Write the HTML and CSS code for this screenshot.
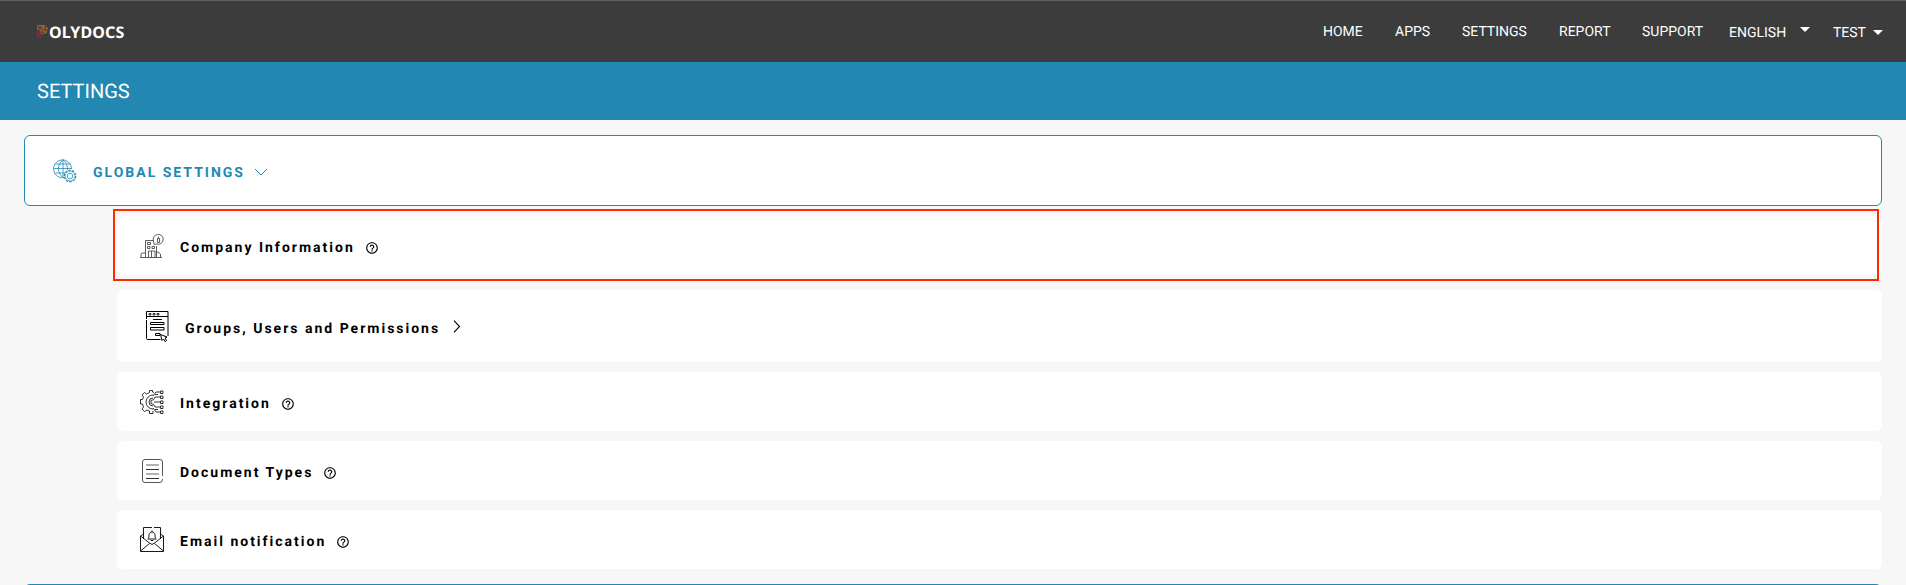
FILE: index.html
```html
<!DOCTYPE html>
<html lang="en">
<head>
<meta charset="utf-8">
<title>Settings</title>
<link rel="stylesheet" href="styles.css">
</head>
<body>
<svg width="0" height="0" class="defs">
  <symbol id="help" viewBox="0 0 24 24"><path fill="currentColor" d="M11 18h2v-2h-2v2zm1-16C6.48 2 2 6.48 2 12s4.480 10 10 10 10-4.480 10-10S17.520 2 12 2zm0 18c-4.410 0-8-3.590-8-8s3.590-8 8-8 8 3.590 8 8-3.590 8-8 8zm0-14c-2.210 0-4 1.790-4 4h2c0-1.100.9-2 2-2s2 .9 2 2c0 2-3 1.750-3 5h2c0-2.250 3-2.500 3-5 0-2.210-1.790-4-4-4z"/></symbol>
</svg>
<header class="topbar">
  <a class="logo">
    <svg class="logo-mark" width="11" height="13" viewBox="0 0 11 13" fill="none" stroke-width=".7">
      <path stroke="#c07a28" d="M.5 4V.5H7L10.500 3 9 7.500 5 9 3.500 5 .5 4 4 .5 6 4 10.500 3M7 .5 6 4 9 7.500 3.500 5 7 .5"/>
      <path stroke="#a8222a" d="M.5 4V12.500H4V8.500L.5 4M.5 8 4 8.500.5 12.500M3.500 5 .5 8 4 12.500M4 8.500 5 9"/>
    </svg>
    <span class="logo-text">OLYDOCS</span>
  </a>
  <nav class="nav">
    <a class="home">HOME</a><a class="apps">APPS</a><a class="set">SETTINGS</a><a class="report">REPORT</a><a class="support">SUPPORT</a>
    <a class="lang">ENGLISH<i class="caret"></i></a><a class="user">TEST<i class="caret"></i></a>
  </nav>
</header>
<div class="banner">SETTINGS</div>
<main class="content">
  <section class="group">
    <svg class="globe" width="24" height="24" viewBox="0 0 24 24" fill="none" stroke="currentColor" stroke-width=".8">
      <path d="M12 18.500A9 9 0 1 1 18.500 10M1 9.500H19M2.500 5H17.500M2.500 14H12M10 .7V18.500M10 .7C4 5 4 14 10 18.500M10 .7C14 4 14.500 7 14.500 11"/>
      <circle cx="17" cy="17" r="5.700" stroke-width="1.200" stroke-dasharray="2.500 1"/><circle cx="17" cy="17" r="4.700" stroke-width=".5"/><circle cx="17" cy="17" r="2.800"/>
    </svg>
    <span class="group-title">GLOBAL SETTINGS</span>
    <svg class="down" width="14" height="8" viewBox="0 0 14 8" fill="none" stroke="currentColor"><path d="M1 1 7 7 13 1"/></svg>
  </section>
  <div class="rows">
    <div class="row">
      <svg class="icon" width="24" height="24" viewBox="0 0 24 24" fill="none" stroke="#333" stroke-width=".8">
        <path d="M0 23.500H22M1 23V20.500Q1 19 3 19H5M5.500 23V6.500H13M16.500 12V23M20.500 23V20Q19 18 16.500 18M8.500 23V17H15V23M11.500 17V23M7.500 8.500H10.500V10.500H7.500ZM7.500 12.500H10V14.500H7.500ZM12 12.500H14.500V14.500H12Z"/>
        <path d="M14 10.500 13.500 7A5 5 0 1 1 16.500 10Z"/><path d="M18.500 2.500V4M17.500 4.500H19.500V8.500H17.500Z"/>
      </svg>
      <span>Company Information</span><svg class="help"><use href="#help"/></svg>
    </div>
    <div class="row tall">
      <svg class="icon" width="24" height="32" viewBox="0 0 24 32" fill="none" stroke="currentColor">
        <path d="M1.500 8V.5H23V25M1.500 9V27.500Q1.500 28.500 3 28.500H15.500M1.500 5.500H23M8 8.500H17"/>
        <path stroke-width=".8" d="M4 2.500H6V4H4ZM8 2.500H10V4H8ZM12 2.500H14V4H12Z"/><path d="M5.500 11.500H19V13.500H5.500ZM5.500 16.500H19V19H5.500ZM15 24.500H10.500V22.500H15V24"/>
        <path fill="#fff" d="M15.500 23.500 22 26 20 27 21.500 29.500 20 30.500 18.500 28 17 29.500Z"/>
      </svg>
      <span>Groups, Users and Permissions</span>
      <svg class="right" width="8" height="13" viewBox="0 0 8 13" fill="none" stroke="currentColor" stroke-width="1.100"><path d="M1 .7 6.500 6.500 1 12.300"/></svg>
    </div>
    <div class="row">
      <svg class="icon" width="24" height="24" viewBox="0 0 24 24" fill="none" stroke="currentColor" stroke-width=".8">
        <path d="M14 2.500 12.500 2V.5H9.500V2.500L6.500 4 4.500 2.500 2 5 3.500 7 2.500 9.500H.5V14H2.500L3.500 17 2 19 4.500 21.500 7 20 9.500 21V23.500H13V21"/>
        <path d="M13 5A7 7 0 0 0 13 19M13 8A4 4 0 0 0 13 16M14 9.500 11 10.500V13.500L14 14.500"/>
        <path d="M14 12H20M14 9 15 7H20M14 15 15 17H20M13 6 16 2H20M13 18 16 22H20M18 4.500H15M18 19.500H15"/>
        <path d="M20.500 1H23V3.500H20.500ZM20.500 6H23V8.500H20.500ZM20.500 11H23V13.500H20.500ZM20.500 16H23V18.500H20.500ZM20.500 21H23V23.500H20.500Z"/>
      </svg>
      <span>Integration</span><svg class="help"><use href="#help"/></svg>
    </div>
    <div class="row">
      <svg class="icon" width="24" height="24" viewBox="0 0 24 24" fill="none" stroke="#555">
        <path d="M22.500 17V3Q22.500.5 20 .5H5Q2.500.5 2.500 3V21Q2.500 23.500 5 23.500H20Q22.500 23.500 22.500 20"/>
        <path stroke="#999" stroke-width="1.500" d="M6 6H19M6 15H19"/><path stroke="#333" d="M6 10.500H19M6 19.500H19"/>
      </svg>
      <span>Document Types</span><svg class="help"><use href="#help"/></svg>
    </div>
    <div class="row">
      <svg class="icon" width="24" height="26" viewBox="0 0 24 26" fill="none" stroke="currentColor" stroke-width=".9">
        <path d="M.5 9V24.500H23.500V9L20.500 7M3.500 7 .5 9 9.500 16 12 17.500 14.500 16 23.500 9M3.500 12V.5H12M14 .5H20.500V12M.5 24 9.500 16.500M23.500 24 14.500 16.500"/>
        <path d="M7.500 12H16.500M8.500 11.500Q9 10.500 9 8C9 4 15 4 15 8Q15 10.500 15.500 11.500M12 3.500V5M10.500 13Q12 14.500 13.500 13"/>
      </svg>
      <span>Email notification</span><svg class="help"><use href="#help"/></svg>
    </div>
    <div class="highlight"></div>
  </div>
  <section class="group"></section>
</main>
</body>
</html>
```
FILE: styles.css
```css
* { box-sizing: border-box; }
body { margin: 0; background: #f7f7f7; font-family: Roboto, sans-serif; color: #000; text-rendering: geometricPrecision; }
.defs { position: absolute; }
svg { flex: none; display: block; }
.topbar { height: 62px; background: #3c3c3c; border-top: 1px solid #5f6063; display: flex; justify-content: space-between; padding: 0 23px 0 37px; color: #fff; }
.logo { display: flex; align-items: flex-start; padding-top: 24px; }
.logo-text { font: 700 16px/22px "Noto Sans", sans-serif; letter-spacing: .1px; margin: -4px 0 0 1px; }
.nav { display: flex; padding-top: 23px; font-size: 14px; line-height: 16px; white-space: nowrap; }
.home { width: 72px; }
.apps { width: 67px; }
.set { width: 97px; }
.report { width: 83px; }
.support { width: 87px; }
.lang, .user { display: flex; padding-top: 1px; }
.lang { width: 104px; }
.user { width: 50px; }
.caret { margin-left: auto; border: 5px solid transparent; border-top-color: #fff; border-bottom: 0; height: 5px; margin-top: 5px; }
.lang .caret { margin: 2px 23px 0 auto; }
.banner { height: 58px; background: #2388b1; color: #fff; font-size: 20px; line-height: 59px; padding-left: 37px; }
.content { height: 465px; overflow: hidden; padding: 15px 24px 0; }
.group { height: 71px; background: #fff; border: 1px solid #2388b1; border-radius: 6px; display: flex; align-items: center; color: #2388b1; padding: 2px 0 0 28px; }
.globe { margin: -2px 16px 0 0; }
.group-title, .row span { font-size: 14px; font-weight: 700; letter-spacing: 2px; line-height: 20px; white-space: nowrap; }
.group-title { margin-top: 2px; }
.down { margin-left: 9px; }
.rows { position: relative; margin: 10px 0 15px 93px; display: flex; flex-direction: column; gap: 10px; }
.row { height: 59px; border-radius: 6px; background: #fff; display: flex; align-items: center; padding-left: 23px; }
.row:first-child { margin-bottom: 5px; }
.row span { margin: 5px 0 0 16px; }
.tall { height: 72px; padding-left: 28px; }
.tall .icon { margin-top: 2px; }
.help { width: 14px; height: 14px; margin: 5px 0 0 10px; }
.right { margin: 0 0 0 13px; }
.highlight { position: absolute; left: -4px; right: 3px; top: -7px; height: 72px; border: 2px solid #ff2a00; }
```
